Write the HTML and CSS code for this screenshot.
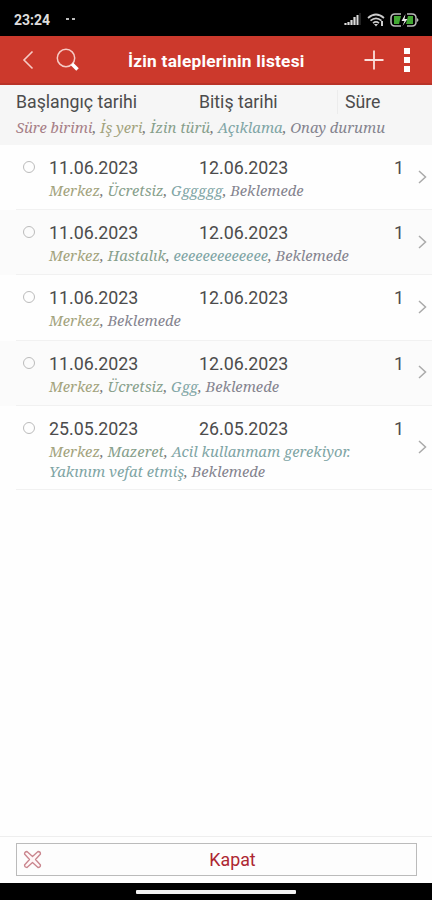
FILE: index.html
```html
<!DOCTYPE html>
<html lang="tr">
<head>
    <meta charset="UTF-8">
    <meta name="viewport" content="width=device-width, initial-scale=1.0">
    <title>İzin taleplerinin listesi</title>
    <link rel="stylesheet" href="styles.css">
</head>
<body>
    <div class="status-bar">
        <span class="time">23:24</span>
        <span class="dots"><i></i><i></i></span>
        <svg class="signal" width="17" height="13" viewBox="0 0 17 13">
            <path d="M1.5 12v-2M4.5 12V9M7.5 12V7M10.5 12V4" stroke="#ddd" stroke-width="2.2"/>
            <path d="M13.5 12V2" stroke="#ddd" stroke-width="2"/>
            <path d="M16 12V0" stroke="#444" stroke-width="1"/>
        </svg>
        <svg class="wifi" width="18" height="14" viewBox="0 0 18 14">
            <path d="M1 5q8-7 16 0M3.5 7.7q5.5-4.6 11 0M6 10.2q3-2.5 6 0" fill="none" stroke="#ccc" stroke-width="1.7"/>
            <path d="M7 11h4l-2 2.5zM14 8h2v5h-2z" fill="#ccc"/>
        </svg>
        <svg class="battery" width="29" height="14" viewBox="0 0 29 14">
            <path d="M11 1H5Q1 1 1 5v4q0 4 4 4h6M17 1h5q4 0 4 4v4q0 4-4 4h-5" fill="none" stroke="#bbb" stroke-width="1.5"/>
            <path d="M4 3h7l-2 8H4zM18 3h5v8h-7z" fill="#42a832"/>
            <path d="M15.5 1l-4 7h3l-2 5 5-7h-3z" fill="#eee"/>
            <path d="M27 5q3 2 0 4z" fill="#bbb"/>
        </svg>
    </div>

    <div class="toolbar">
        <svg class="back" width="12" height="20" viewBox="0 0 12 20">
            <path d="M10.5 1.5L2 10l8.5 8.5" fill="none" stroke="#f6cbc5" stroke-width="1.6"/>
        </svg>
        <svg class="search" width="24" height="24" viewBox="0 0 24 24">
            <circle cx="10" cy="10" r="8.7" fill="none" stroke="#f6cbc5" stroke-width="1.5"/>
            <path d="M16 16l5.5 5.5" stroke="#fff" stroke-width="3.5"/>
        </svg>
        <h1>İzin taleplerinin listesi</h1>
        <svg class="add" width="20" height="20" viewBox="0 0 20 20">
            <path d="M10 0.5v19M0.5 10h19" stroke="#fbe0dc" stroke-width="1.8"/>
        </svg>
        <span class="more"><i></i><i></i><i></i></span>
    </div>

    <div class="list-header">
        <div class="columns">
            <span class="col-start">Başlangıç tarihi</span>
            <span class="col-end">Bitiş tarihi</span>
            <span class="col-time">Süre</span>
        </div>
        <p class="details"><span class="unit">Süre birimi</span>, <span class="place">İş yeri</span>, <span class="type">İzin türü</span>, <span class="note">Açıklama</span>, <span class="state">Onay durumu</span></p>
    </div>

    <div class="list">
        <div class="row">
            <span class="radio"></span>
            <div class="content">
                <div class="dates"><span>11.06.2023</span><span>12.06.2023</span><span class="days">1</span></div>
                <p class="details"><span class="place">Merkez</span>, <span class="type">Ücretsiz</span>, <span class="note">Gggggg</span>, <span class="state">Beklemede</span></p>
            </div>
            <svg class="arrow" width="9" height="14" viewBox="0 0 9 14"><path d="M1 1l6.5 6L1 13"/></svg>
        </div>
        <div class="row alt">
            <span class="radio"></span>
            <div class="content">
                <div class="dates"><span>11.06.2023</span><span>12.06.2023</span><span class="days">1</span></div>
                <p class="details"><span class="place">Merkez</span>, <span class="type">Hastalık</span>, <span class="note">eeeeeeeeeeeee</span>, <span class="state">Beklemede</span></p>
            </div>
            <svg class="arrow" width="9" height="14" viewBox="0 0 9 14"><path d="M1 1l6.5 6L1 13"/></svg>
        </div>
        <div class="row">
            <span class="radio"></span>
            <div class="content">
                <div class="dates"><span>11.06.2023</span><span>12.06.2023</span><span class="days">1</span></div>
                <p class="details"><span class="place">Merkez</span>, <span class="state">Beklemede</span></p>
            </div>
            <svg class="arrow" width="9" height="14" viewBox="0 0 9 14"><path d="M1 1l6.5 6L1 13"/></svg>
        </div>
        <div class="row alt">
            <span class="radio"></span>
            <div class="content">
                <div class="dates"><span>11.06.2023</span><span>12.06.2023</span><span class="days">1</span></div>
                <p class="details"><span class="place">Merkez</span>, <span class="type">Ücretsiz</span>, <span class="note">Ggg</span>, <span class="state">Beklemede</span></p>
            </div>
            <svg class="arrow" width="9" height="14" viewBox="0 0 9 14"><path d="M1 1l6.5 6L1 13"/></svg>
        </div>
        <div class="row">
            <span class="radio"></span>
            <div class="content">
                <div class="dates"><span>25.05.2023</span><span>26.05.2023</span><span class="days">1</span></div>
                <p class="details"><span class="place">Merkez</span>, <span class="type">Mazeret</span>, <span class="note">Acil kullanmam gerekiyor.<br>Yakınım vefat etmiş</span>, <span class="state">Beklemede</span></p>
            </div>
            <svg class="arrow" width="9" height="14" viewBox="0 0 9 14"><path d="M1 1l6.5 6L1 13"/></svg>
        </div>
    </div>

    <div class="footer">
        <button class="close">
            <svg width="19" height="19" viewBox="0 0 19 19">
                <path d="M4 1.5L9.5 6.5 15 1.5q2.5 0 2.5 2.5L12.5 9.5l5 5.5q0 2.5-2.5 2.5L9.5 12.5 4 17.5q-2.5 0-2.5-2.5l5-5.5L1.5 4Q1.5 1.5 4 1.5z" fill="#fff6f7" stroke="#c9858d" stroke-width="1.3" stroke-linejoin="round"/>
            </svg>
            <span>Kapat</span>
        </button>
    </div>
    <div class="nav-bar"><span></span></div>
</body>
</html>
```
FILE: styles.css
```css
* {
    box-sizing: border-box;
}
body {
    margin: 0;
    height: 900px;
    display: flex;
    flex-direction: column;
    font-family: Roboto, "Liberation Sans", sans-serif;
    background-color: #fefefe;
    color: #4c4c4c;
    overflow: hidden;
}
svg {
    display: block;
    flex: none;
}
.status-bar {
    height: 36px;
    padding: 3px 13px 0 14px;
    display: flex;
    align-items: center;
    background-color: #000;
}
.time {
    color: #ddd;
    font-size: 14px;
    font-weight: bold;
}
.dots {
    display: flex;
    gap: 3px;
    margin: -1px auto 0 16px;
}
.dots i {
    width: 3px;
    height: 2px;
    background-color: #bbb;
}
.wifi {
    margin-left: 6px;
}
.battery {
    margin-left: 5px;
}
.toolbar {
    height: 49px;
    padding: 0 22px 0 22px;
    display: flex;
    align-items: center;
    background-color: #cc392c;
    border-bottom: 2px solid #b93328;
}
.search {
    margin-left: 22px;
}
h1 {
    flex: 1;
    margin: 3px 0 0;
    padding-left: 48px;
    font-size: 17.3px;
    font-weight: bold;
    letter-spacing: 0.23px;
    color: #fff;
    white-space: nowrap;
}
.add {
    margin-right: 20px;
}
.more {
    display: flex;
    flex-direction: column;
    gap: 3px;
}
.more i {
    width: 6px;
    height: 6px;
    background-color: #fff;
}
.list-header {
    height: 60px;
    padding: 5px 0 0 16px;
    background-color: #f6f6f6;
}
.columns {
    display: grid;
    grid-template-columns: 183px 138px 1fr;
    font-size: 17.7px;
    line-height: 24px;
}
.col-time {
    padding-left: 7px;
    border-left: 1px solid #ececec;
}
.details {
    margin: 0;
    font-family: "Noto Serif", "DejaVu Serif Condensed", "DejaVu Serif", serif;
    font-size: 14.75px;
    font-style: italic;
    line-height: 20px;
    color: #777;
    white-space: nowrap;
}
.list-header .details {
    margin-top: 3px;
}
.unit {
    color: #a77f87;
}
.place {
    color: #a3a37d;
}
.type {
    color: #87a08c;
}
.note {
    color: #7fa5a5;
}
.state {
    color: #85848f;
}
.row {
    display: flex;
    min-height: 65.2px;
    padding: 11px 5px 9px 23px;
    background-image: linear-gradient(#f1f1f1, #f1f1f1);
    background-size: 416px 1px;
    background-position: right bottom;
    background-repeat: no-repeat;
}
.row.alt {
    background-color: #fbfbfb;
}
.radio {
    width: 12px;
    height: 12px;
    margin: 5px 14px 0 0;
    border: 1.5px solid #bbb;
    border-radius: 50%;
}
.content {
    flex: 1;
}
.dates {
    display: grid;
    grid-template-columns: 150px 150px 1fr;
    font-size: 17.8px;
    line-height: 24px;
}
.days {
    text-align: right;
    padding-right: 14px;
}
.arrow {
    align-self: center;
    margin-top: -4px;
}
.arrow path {
    fill: none;
    stroke: #aaa;
    stroke-width: 1.5;
}
.footer {
    height: 47px;
    margin-top: auto;
    padding: 6px 15px 0 16px;
    border-top: 1px solid #eee;
}
.close {
    width: 100%;
    height: 33px;
    padding: 0 6px;
    display: flex;
    align-items: center;
    border: 1px solid #bbb;
    background-color: #fdfdfd;
    font-family: inherit;
    font-size: 17.8px;
    color: #ad2732;
}
.close span {
    flex: 1;
    padding-left: 13px;
    text-align: center;
}
.nav-bar {
    height: 17px;
    padding-top: 7px;
    background-color: #000;
}
.nav-bar span {
    display: block;
    width: 160px;
    height: 4px;
    margin: 0 auto;
    border-radius: 1px;
    background-color: #f3f3f3;
}
```
